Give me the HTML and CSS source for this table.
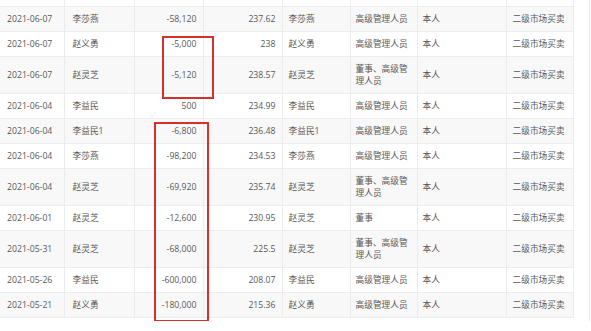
FILE: index.html
```html
<!DOCTYPE html>
<html lang="zh">
<head>
<meta charset="utf-8">
<link rel="stylesheet" href="styles.css">
</head>
<body>
<div class="panel">
  <table class="trades">
    <colgroup>
      <col class="c-date"><col class="c-name"><col class="c-amt"><col class="c-price">
      <col class="c-person"><col class="c-pos"><col class="c-rel"><col class="c-method">
    </colgroup>
    <tbody>
      <tr class="single"><td></td><td></td><td></td><td></td><td></td><td></td><td></td><td></td></tr>
      <tr class="single"><td>2021-06-07</td><td>李莎燕</td><td class="num">-58,120</td><td class="num">237.62</td><td>李莎燕</td><td>高级管理人员</td><td>本人</td><td>二级市场买卖</td></tr>
      <tr class="single"><td>2021-06-07</td><td>赵义勇</td><td class="num">-5,000</td><td class="num">238</td><td>赵义勇</td><td>高级管理人员</td><td>本人</td><td>二级市场买卖</td></tr>
      <tr class="double"><td>2021-06-07</td><td>赵灵芝</td><td class="num">-5,120</td><td class="num">238.57</td><td>赵灵芝</td><td>董事、高级管理人员</td><td>本人</td><td>二级市场买卖</td></tr>
      <tr class="single"><td>2021-06-04</td><td>李益民</td><td class="num">500</td><td class="num">234.99</td><td>李益民</td><td>高级管理人员</td><td>本人</td><td>二级市场买卖</td></tr>
      <tr class="single"><td>2021-06-04</td><td>李益民1</td><td class="num">-6,800</td><td class="num">236.48</td><td>李益民1</td><td>高级管理人员</td><td>本人</td><td>二级市场买卖</td></tr>
      <tr class="single"><td>2021-06-04</td><td>李莎燕</td><td class="num">-98,200</td><td class="num">234.53</td><td>李莎燕</td><td>高级管理人员</td><td>本人</td><td>二级市场买卖</td></tr>
      <tr class="double"><td>2021-06-04</td><td>赵灵芝</td><td class="num">-69,920</td><td class="num">235.74</td><td>赵灵芝</td><td>董事、高级管理人员</td><td>本人</td><td>二级市场买卖</td></tr>
      <tr class="single"><td>2021-06-01</td><td>赵灵芝</td><td class="num">-12,600</td><td class="num">230.95</td><td>赵灵芝</td><td>董事</td><td>本人</td><td>二级市场买卖</td></tr>
      <tr class="double"><td>2021-05-31</td><td>赵灵芝</td><td class="num">-68,000</td><td class="num">225.5</td><td>赵灵芝</td><td>董事、高级管理人员</td><td>本人</td><td>二级市场买卖</td></tr>
      <tr class="single"><td>2021-05-26</td><td>李益民</td><td class="num">-600,000</td><td class="num">208.07</td><td>李益民</td><td>高级管理人员</td><td>本人</td><td>二级市场买卖</td></tr>
      <tr class="single"><td>2021-05-21</td><td>赵义勇</td><td class="num">-180,000</td><td class="num">215.36</td><td>赵义勇</td><td>高级管理人员</td><td>本人</td><td>二级市场买卖</td></tr>
    </tbody>
  </table>
  <div class="mark mark-a"></div>
  <div class="mark mark-b"></div>
</div>
</body>
</html>
```

FILE: styles.css
```css
html, body {
  margin: 0;
  padding: 0;
  background: #fff;
}
body {
  width: 591px;
  height: 331px;
  overflow: hidden;
  font-family: "Open Sans", "Noto Sans CJK SC", sans-serif;
  font-size: 8.7px;
  color: #585858;
}
.panel {
  position: relative;
  width: 589px;
  height: 321px;
  border-right: 1px solid #e6e6e6;
  overflow: hidden;
}
.trades {
  width: 573px;
  table-layout: fixed;
  border-collapse: collapse;
  margin-top: -19px;
}
.c-date { width: 64px; }
.c-name { width: 70px; }
.c-amt { width: 69px; }
.c-price { width: 79px; }
.c-person { width: 68px; }
.c-pos { width: 67px; }
.c-rel { width: 89px; }
.c-method { width: 67px; }
.trades td {
  padding: 0 5px 0 7px;
  line-height: 12px;
  vertical-align: middle;
  border-right: 1px solid #ebebeb;
  border-bottom: 1px solid #ececec;
  white-space: normal;
}
.trades td:nth-child(2) { padding-left: 8px; }
.trades td:nth-child(5),
.trades td:nth-child(8) { padding-left: 6px; }
.trades td:nth-child(6),
.trades td:nth-child(7) { padding-left: 5px; }
.trades td.num {
  text-align: right;
  padding-right: 6px;
  padding-left: 4px;
}
.trades tr.single { height: 25px; }
.trades tr.double { height: 37px; }
.trades tr:nth-child(even) td { background: #f8f8f8; }
.mark {
  position: absolute;
  border: 2px solid #d6302b;
  box-sizing: border-box;
}
.mark-a {
  left: 162px;
  top: 36px;
  width: 52px;
  height: 63px;
}
.mark-b {
  left: 154px;
  top: 122px;
  width: 55px;
  height: 200px;
}
```
